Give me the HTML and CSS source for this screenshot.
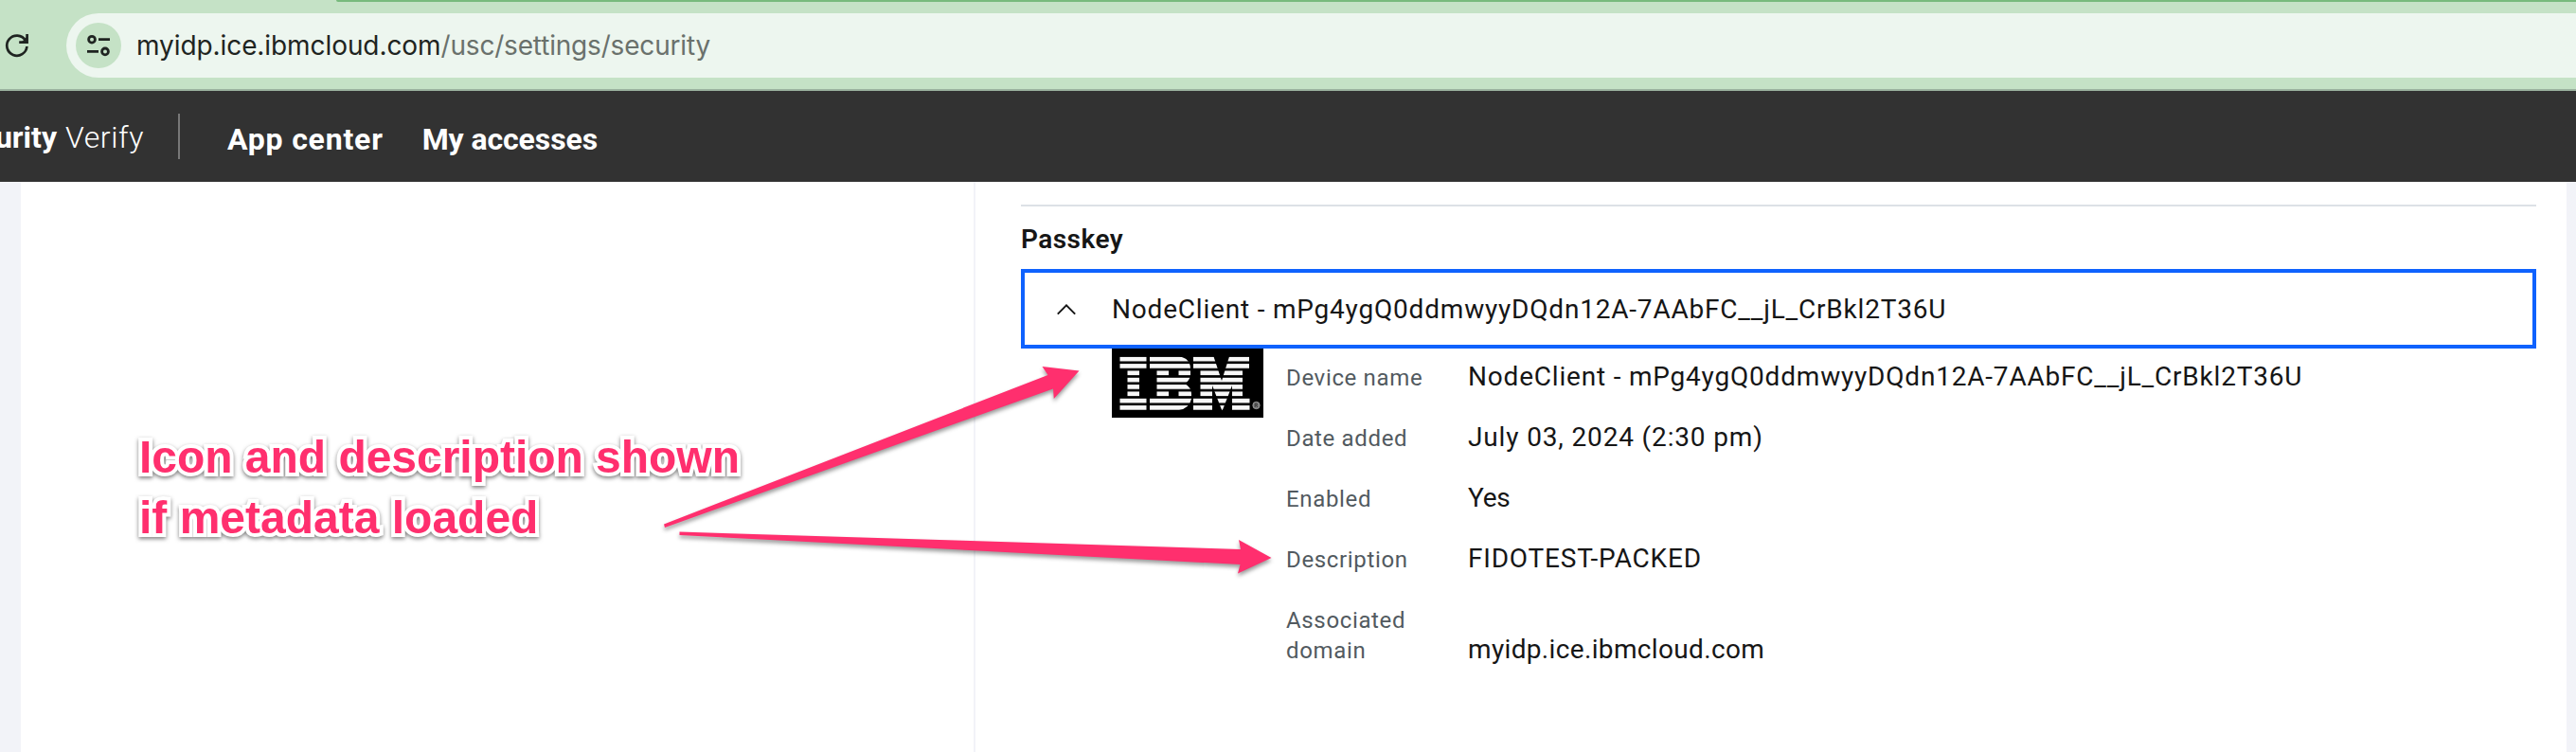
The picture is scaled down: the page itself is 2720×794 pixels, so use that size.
FILE: index.html
```html
<!DOCTYPE html>
<html lang="en">
<head>
<meta charset="utf-8">
<title>Security settings</title>
<link rel="stylesheet" href="styles.css">
</head>
<body>
<div class="tab-strip"></div>
<div class="toolbar">
  <svg class="reload" width="30" height="48" viewBox="0 0 30 48" fill="none" stroke="#1f2421" stroke-width="2.7">
    <path d="M28.4 25A10.6 10.6 0 1 1 26.8 18.5"/>
    <path d="M20.2 20.7H28.6V12"/>
    <path d="M22.5 20.7H28.6V14.5" fill="#1f2421" stroke="none"/>
  </svg>
  <div class="omnibox">
    <div class="site-info">
      <svg width="48" height="48" viewBox="0 0 48 48" fill="none" stroke="#1f2421" stroke-width="2.8">
        <circle cx="17" cy="17.7" r="3.4"/><path d="M24 17.7H36M12 30.4H24"/><circle cx="31" cy="30.4" r="3.4"/>
      </svg>
    </div>
    <div class="url"><span class="host">myidp.ice.ibmcloud.com</span><span class="path">/usc/settings/security</span></div>
  </div>
</div>
<header class="app-header">
  <div class="brand"><b>urity</b><span class="product">Verify</span></div>
  <nav class="nav"><a class="nav-center">App center</a><a class="nav-access">My accesses</a></nav>
</header>
<main class="page">
  <aside class="side"></aside>
  <section class="content">
    <h2 class="heading">Passkey</h2>
    <div class="accordion">
      <svg class="chevron" width="20" height="12" viewBox="0 0 20 12" fill="none" stroke="#161616" stroke-width="2"><path d="M.8 10.6L10 1.4L19.2 10.6"/></svg>
      <span class="node">NodeClient - mPg4ygQ0ddmwyyDQdn12A-7AAbFC__jL_CrBkl2T36U</span>
    </div>
    <div class="details">
      <svg class="logo" width="160" height="73" viewBox="0 0 160 73">
        <defs>
          <pattern id="bars" width="160" height="7.33" patternUnits="userSpaceOnUse" y="8.8"><rect width="160" height="4.7" fill="#f7f7f7"/></pattern>
        </defs>
        <rect width="160" height="73" fill="#000"/>
        <g fill="url(#bars)">
          <path d="M8.5 8.5H36.5V22H29V52H36.5V65H8.5V52H16.5V22H8.5Z"/>
          <path fill-rule="evenodd" d="M40 8.5H71Q83 10 83 22V29Q81 35 77 37Q84 41 84 48V53Q82 63 71 65H40V52H47.5V22H40ZM60 23V29H70.5V23ZM60 45V51H70.5V45Z"/>
          <path d="M86 8.5H107.5L116 34L124 8.5H145V22H138V52H145.5V65H127V39L116.5 66L106 39V65H86V52H93.5V22H86Z"/>
        </g>
        <circle cx="152.5" cy="60" r="3.7" fill="#777" stroke="#aaa" stroke-width=".7"/>
        <path d="M151.2 62V58H153.2V60H151.2M152.4 60L154 62" fill="none" stroke="#333" stroke-width=".8"/>
      </svg>
      <dl class="fields">
        <dt>Device name</dt><dd class="node">NodeClient - mPg4ygQ0ddmwyyDQdn12A-7AAbFC__jL_CrBkl2T36U</dd>
        <dt>Date added</dt><dd class="date">July 03, 2024 (2:30 pm)</dd>
        <dt>Enabled</dt><dd class="flag">Yes</dd>
        <dt>Description</dt><dd class="desc">FIDOTEST-PACKED</dd>
        <dt>Associated domain</dt><dd class="domain">myidp.ice.ibmcloud.com</dd>
      </dl>
    </div>
  </section>
</main>
<p class="note"><span class="note-first">Icon and description shown</span><br><span class="note-second">if metadata loaded</span></p>
<svg class="arrows" width="680" height="250" viewBox="680 370 680 250" fill="#ff2f6e">
  <path d="M701 553.5L1106.5 396L1100.5 387L1139.5 391.5L1112.8 421L1112 410.5L702 557Z"/>
  <path d="M717.5 561.5L1310 580L1308 570L1342.5 589L1307 605.5L1309.5 596L717.5 565Z"/>
</svg>
</body>
</html>
```
FILE: styles.css
```css
* { box-sizing: border-box; }
body { margin: 0; width: 2720px; height: 794px; overflow: hidden; background: linear-gradient(#c5e2c6 0 94px, #fff 94px); font-family: Roboto, "Liberation Sans", sans-serif; color: #161616; position: relative; }
h2, p, dl, dd { margin: 0; }
svg { display: block; }

.tab-strip { height: 2px; margin-left: 355px; background: #78ba7d; border-bottom-left-radius: 4px; }
.toolbar { display: flex; height: 94px; padding: 12px 0; align-items: flex-start; border-bottom: 2px solid #9bb39f; background: #c5e2c6; }
.reload { margin-top: 10px; }
.omnibox { flex: 1; height: 68px; margin-left: 40px; padding: 0 10px; display: flex; align-items: center; background: #edf6ef; border-radius: 34px 0 0 34px; }
.site-info { width: 48px; height: 48px; border-radius: 50%; background: #c5e2c6; }
.url { margin-left: 16px; font: 28px/40px Inter, Roboto, sans-serif; white-space: nowrap; }
.host { color: #1f2421; letter-spacing: -.08px; }
.path { color: #6a716c; letter-spacing: -.18px; }

.app-header { display: flex; height: 96px; background: #323232; color: #fff; font-size: 32px; line-height: 40px; }
.brand { width: 190px; height: 48px; margin-top: 24px; border-right: 2px solid #777; display: flex; white-space: nowrap; justify-content: flex-end; padding: 5px 36px 0 0; }
.brand b { margin-right: 9px; font-weight: 700; }
.product { font-weight: 300; letter-spacing: .6px; }
.nav { display: flex; gap: 41px; margin: 31px 0 0 50px; font-weight: 700; }
.nav-center { letter-spacing: .8px; }
.nav-access { letter-spacing: -.1px; }

.page { display: flex; height: 602px; background: #fff; border-left: 22px solid #f2f3f8; border-right: 10px solid #f2f3f8; }
.side { width: 1008px; border-right: 2px solid #f2f3f8; }
.content { width: 1600px; margin: 24px 0 0 48px; border-top: 2px solid #dde1e6; }
.heading { height: 66px; padding-top: 17px; font-size: 28px; line-height: 36px; font-weight: 600; letter-spacing: .45px; }
.accordion { height: 84px; border: 4px solid #0f62fe; display: flex; align-items: center; padding: 1px 0 0 34px; font-size: 28px; line-height: 36px; }
.chevron { margin-right: 38px; }
.details { display: flex; align-items: flex-start; padding-left: 96px; }
.fields { display: grid; grid-template-columns: 192px auto; grid-template-rows: repeat(4, 32px) 64px; row-gap: 32px; margin: 15px 0 0 24px; align-items: last baseline; line-height: 32px; }
.fields dt { width: 150px; font-size: 24px; color: #525a60; letter-spacing: .65px; }
.fields dd { font-size: 28px; white-space: nowrap; }
.node { letter-spacing: .8px; white-space: nowrap; }
.date { letter-spacing: .85px; }
.flag { letter-spacing: -.3px; }
.desc { letter-spacing: .8px; }
.domain { letter-spacing: .35px; }

.note { position: absolute; left: 147px; top: 451px; font: bold 48px/64px "Liberation Sans", sans-serif; color: #ff2f6e; -webkit-text-stroke: 8px #fff; paint-order: stroke fill; stroke-linejoin: round; filter: drop-shadow(0 2px 2px rgba(0, 0, 0, .5)); white-space: nowrap; }
.note-first { letter-spacing: -.03px; }
.note-second { letter-spacing: 0; }
.arrows { position: absolute; left: 680px; top: 370px; filter: drop-shadow(0 3px 2px rgba(0, 0, 0, .4)); }
```
